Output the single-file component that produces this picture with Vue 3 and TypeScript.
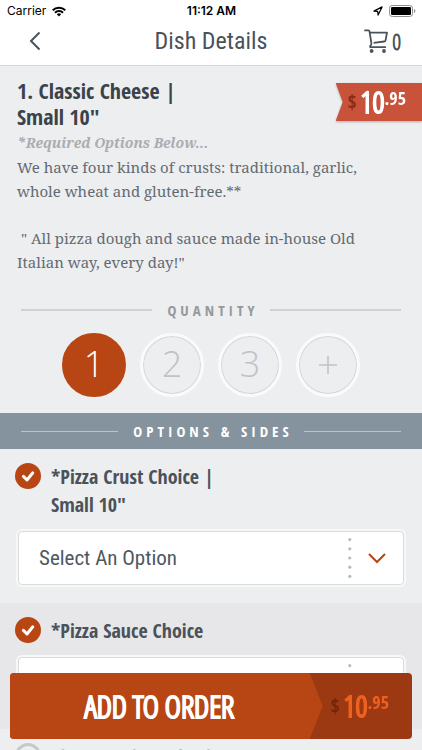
<script setup lang="ts">
import { ref } from 'vue'

interface OptionGroup {
  id: string
  label: string
  required: boolean
  choices: string[]
}

const quantities: { value: string; label: string }[] = [
  { value: '1', label: '1' },
  { value: '2', label: '2' },
  { value: '3', label: '3' },
  { value: 'more', label: '+' },
]
const quantity = ref('1')

const groups: OptionGroup[] = [
  { id: 'crust', label: '*Pizza Crust Choice | Small 10"', required: true, choices: ['Select An Option'] },
  { id: 'sauce', label: '*Pizza Sauce Choice', required: true, choices: ['Select An Option'] },
  { id: 'topping', label: 'Pizza Topping Selection', required: false, choices: ['Select An Option'] },
]
</script>

<template>
  <div class="screen">
    <header class="top">
      <div class="status">
        <div class="carrier">
          <span>Carrier</span>
          <svg width="14" height="11" viewBox="0 0 14 11" aria-hidden="true">
            <g fill="none" stroke="#000" stroke-width="2">
              <path d="M0.7 4.2A9 9 0 0 1 13.3 4.2" />
              <path d="M3 6.8A5.6 5.6 0 0 1 11 6.8" />
            </g>
            <path d="M4.8 8.3A3.2 3.2 0 0 1 9.2 8.3L7 10.6Z" fill="#000" />
          </svg>
        </div>
        <span class="clock">11:12 AM</span>
        <div class="power">
          <svg width="10" height="10" viewBox="0 0 10 10" aria-hidden="true">
            <path d="M0.9 5.1L9.1 0.9L5.1 9.1L4.7 5.4Z" fill="none" stroke="#000" stroke-width="1.2" stroke-linejoin="round" />
          </svg>
          <svg width="27" height="12" viewBox="0 0 27 12" aria-hidden="true">
            <rect x="0.5" y="0.5" width="23" height="11" rx="2.8" fill="none" stroke="#8e8e8e" />
            <rect x="2" y="2" width="20" height="8" rx="1.3" />
            <path d="M25 4V8Q26.4 7.3 26.4 6Q26.4 4.7 25 4Z" fill="#8e8e8e" />
          </svg>
        </div>
      </div>
      <nav class="bar">
        <button class="icon-button back" type="button" aria-label="Back">
          <svg width="12" height="20" viewBox="0 0 12 20" aria-hidden="true">
            <path d="M10.5 1.5L2 10L10.5 18.5" fill="none" stroke="#4a525a" stroke-width="2" />
          </svg>
        </button>
        <h1>Dish Details</h1>
        <button class="icon-button cart" type="button" aria-label="Cart, 0 items">
          <svg width="24" height="24" viewBox="0 0 24 24" aria-hidden="true">
            <g fill="none" stroke="#4a525a" stroke-width="1.8" stroke-linejoin="round">
              <path d="M0.3 1.4H4.4Q5.3 1.4 5.5 2.4L7.4 14.2Q7.6 15.2 6.9 16L6.2 17Q5.7 18.2 7 18.2H22" />
              <path d="M5.8 3.6H23L21.6 11.2Q21.4 12.4 20.2 12.5L9.6 13.8" />
            </g>
            <circle cx="7.6" cy="22" r="1.9" fill="#4a525a" />
            <circle cx="20" cy="22" r="1.9" fill="#4a525a" />
          </svg>
          <span>0</span>
        </button>
      </nav>
    </header>

    <main class="content">
      <section class="intro">
        <div class="heading">
          <h2>1. Classic Cheese | Small 10"</h2>
          <div class="ribbon">
            <div class="ribbon-face">
              <span class="currency">$</span>
              <span class="whole">10</span>
              <span class="cents">.95</span>
            </div>
          </div>
        </div>
        <p class="required">*Required Options Below...</p>
        <p class="about">We have four kinds of crusts: traditional, garlic, whole wheat and gluten-free.**</p>
        <p class="about quote">" All pizza dough and sauce made in-house Old Italian way, every day!"</p>

        <div class="quantity" role="radiogroup" aria-labelledby="quantity-title">
          <div class="rule"><h3 id="quantity-title">QUANTITY</h3></div>
          <div class="circles">
            <label v-for="q in quantities" :key="q.value" class="circle" :class="{ on: quantity === q.value }">
              <input v-model="quantity" class="sr" type="radio" name="quantity" :value="q.value" />
              <svg v-if="q.value === 'more'" width="18" height="18" viewBox="0 0 18 18" role="img" aria-label="More">
                <path d="M9 0V18M0 9H18" stroke="#bfc3c7" stroke-width="1.6" />
              </svg>
              <span v-else>{{ q.label }}</span>
            </label>
          </div>
        </div>
      </section>

      <div class="rule band"><h3>OPTIONS &amp; SIDES</h3></div>

      <section v-for="g in groups" :key="g.id" class="group" :class="{ optional: !g.required }">
        <div class="group-head">
          <svg width="26" height="26" viewBox="0 0 26 26" aria-hidden="true">
            <template v-if="g.required">
              <circle cx="13" cy="13" r="13" fill="#b84614" />
              <path d="M8.4 13.4L12 17L17.8 9.8" fill="none" stroke="#fff" stroke-width="3" stroke-linecap="round" stroke-linejoin="round" />
            </template>
            <circle v-else cx="13" cy="13" r="11.5" fill="none" stroke="#c6c8ca" stroke-width="3" />
          </svg>
          <label :for="g.id">{{ g.label }}</label>
        </div>
        <div class="picker">
          <select :id="g.id">
            <option v-for="c in g.choices" :key="c">{{ c }}</option>
          </select>
          <svg class="picker-mark" width="56" height="52" viewBox="0 0 56 52" aria-hidden="true">
            <path d="M21 22L29 30L37 22" fill="none" stroke="#b84614" stroke-width="2" />
            <g fill="#b9bbbd">
              <circle v-for="n in 5" :key="n" cx="1.8" :cy="n * 9.2 - 1.6" r="1.6" />
            </g>
          </svg>
        </div>
      </section>
    </main>

    <button class="order" type="button">
      <span class="order-text">ADD TO ORDER</span>
      <span class="order-price">
        <span class="currency">$</span>
        <span class="whole">10</span>
        <span class="cents">.95</span>
      </span>
    </button>
  </div>
</template>

<style>
body {
  margin: 0;
  background: #edeef0;
}
</style>

<style scoped>
* {
  box-sizing: border-box;
}

.screen {
  display: flex;
  flex-direction: column;
  height: 100vh;
  overflow: hidden;
  color: #4a525a;
  background: #edeef0;
  font-family: 'Open Sans Condensed', 'Roboto Condensed', 'Open Sans', sans-serif;
}

h1, h2, h3, p {
  margin: 0;
}

button {
  padding: 0;
  border: 0;
  background: none;
  color: inherit;
  cursor: pointer;
}

.sr {
  position: absolute;
  width: 1px;
  height: 1px;
  margin: 0;
  padding: 0;
  overflow: hidden;
  clip-path: inset(50%);
  appearance: none;
}

.top {
  flex: none;
  background: #fff;
  border-bottom: 1px solid #d6d8da;
}

.status {
  display: grid;
  grid-template-columns: 1fr auto 1fr;
  align-items: center;
  height: 22px;
  padding: 0 6px 0 7px;
  color: #000;
  font: 12px/22px Inter, Roboto, sans-serif;
}

.carrier,
.power {
  display: flex;
  align-items: center;
  gap: 6px;
}

.power {
  justify-content: flex-end;
}

.clock {
  font-weight: 600;
}

.bar {
  display: grid;
  grid-template-columns: 1fr auto 1fr;
  align-items: center;
  height: 43px;
  padding: 0 21px 6px;
}

.bar h1 {
  font: 400 24px/32px 'Roboto Condensed', 'Open Sans Condensed', sans-serif;
}

.icon-button {
  display: flex;
  align-items: center;
  height: 32px;
}

.back {
  padding-left: 8px;
}

.cart {
  justify-self: end;
  gap: 4px;
  font: 700 22px/32px 'Open Sans Condensed Light', 'Roboto Condensed', sans-serif;
}

.content {
  flex: 1;
  min-height: 0;
  overflow-y: auto;
  scrollbar-width: none;
}

.intro {
  padding: 11px 0 16px;
}

.heading {
  display: flex;
  justify-content: space-between;
  align-items: flex-start;
}

h2 {
  width: 200px;
  padding-left: 17px;
  color: #3b4349;
  font-size: 22px;
  line-height: 26px;
}

.ribbon {
  padding-top: 6px;
  filter: drop-shadow(0 1px 1px #0004);
}

.ribbon-face {
  display: flex;
  align-items: flex-start;
  height: 38px;
  padding: 0 16px 0 12px;
  background: #c9523a;
  clip-path: polygon(0 0, 100% 0, 100% 100%, 0 100%, 7px 50%);
  color: #fff;
}

.currency,
.whole,
.cents {
  font-family: 'Open Sans Condensed', 'Roboto Condensed', sans-serif;
  font-weight: 700;
}

.currency {
  padding-right: 4px;
  color: #8a2b14;
  font-size: 19px;
  line-height: 38px;
}

.whole {
  font-family: 'Open Sans Condensed Light', 'Roboto Condensed', sans-serif;
  font-size: 30px;
  line-height: 38px;
  -webkit-text-stroke: 1px currentColor;
}

.cents {
  font-size: 18px;
  line-height: 30px;
}

.required,
.about {
  padding: 0 40px 0 17px;
  font: 15px/24px 'Noto Serif', 'Liberation Serif', serif;
}

.required {
  padding-top: 2px;
  color: #a9adb1;
  font-size: 14px;
  font-style: italic;
  font-weight: 700;
}

.about {
  color: #636b73;
}

.quote {
  padding-top: 23px;
  text-indent: 4px;
}

.quantity {
  padding-top: 25px;
}

.rule {
  display: flex;
  align-items: center;
  gap: 15px;
  padding: 0 21px;
  color: #96999c;
  line-height: 22px;
}

.rule h3 {
  margin-right: -4px;
  font-size: 15px;
  letter-spacing: 4px;
}

.rule::before,
.rule::after {
  content: '';
  flex: 1;
  border-top: 2px solid #cfd1d3;
}

.circles {
  display: flex;
  justify-content: center;
  gap: 14px;
  padding-top: 12px;
}

.circle {
  display: flex;
  align-items: center;
  justify-content: center;
  width: 64px;
  height: 64px;
  border: 3px solid #f9fafa;
  border-radius: 50%;
  box-shadow: inset 0 0 0 1px #d4d6d8;
  color: #bfc3c7;
  font: 300 36px/56px 'Open Sans', 'Open Sans Condensed', sans-serif;
  cursor: pointer;
}

.circle span {
  padding-bottom: 2px;
}

.circle.on {
  border-color: #b84614;
  background: #b84614;
  box-shadow: none;
  color: #fff;
}

.band {
  height: 36px;
  background: #85939e;
  color: #fff;
}

.band::before,
.band::after {
  border-top: 1px solid #bcc4ca;
}

.group {
  padding: 14px 18px 18px;
}

.group:nth-of-type(odd) {
  background: #e7e7e9;
}

.group-head {
  display: flex;
  gap: 10px;
  margin-left: -3px;
}

.group-head svg {
  flex: none;
}

.group-head label {
  max-width: 190px;
  font-size: 20px;
  font-weight: 700;
  line-height: 28px;
}

.group.optional label {
  max-width: none;
  color: #b4b6b9;
}

.picker {
  display: grid;
  align-items: center;
  margin-top: 12px;
}

.picker > * {
  grid-area: 1 / 1;
}

.picker select {
  width: 100%;
  height: 54px;
  padding: 0 60px 0 20px;
  appearance: none;
  border: 1px solid #dadbdd;
  border-radius: 4px;
  outline: 2px solid #f6f7f7;
  background: #fff;
  color: #50585f;
  font: 400 21px/52px 'Roboto Condensed', 'Open Sans Condensed', sans-serif;
}

.picker-mark {
  justify-self: end;
  pointer-events: none;
}

.order {
  position: fixed;
  right: 10px;
  bottom: 11px;
  left: 10px;
  display: flex;
  height: 66px;
  overflow: hidden;
  border-radius: 4px;
  background: #9c3912;
}

.order-text {
  flex: 1;
  padding-right: 14px;
  background: #b84614;
  clip-path: polygon(0 0, calc(100% - 13px) 0, 100% 50%, calc(100% - 13px) 100%, 0 100%);
  color: #fff;
  font: 700 31px/66px 'Open Sans Condensed Light', 'Roboto Condensed', sans-serif;
  -webkit-text-stroke: 1px #fff;
}

.order-price {
  display: flex;
  align-items: flex-start;
  padding: 14px 23px 0 8px;
  color: #f0601f;
}

.order-price .currency {
  color: #70260c;
}
</style>
